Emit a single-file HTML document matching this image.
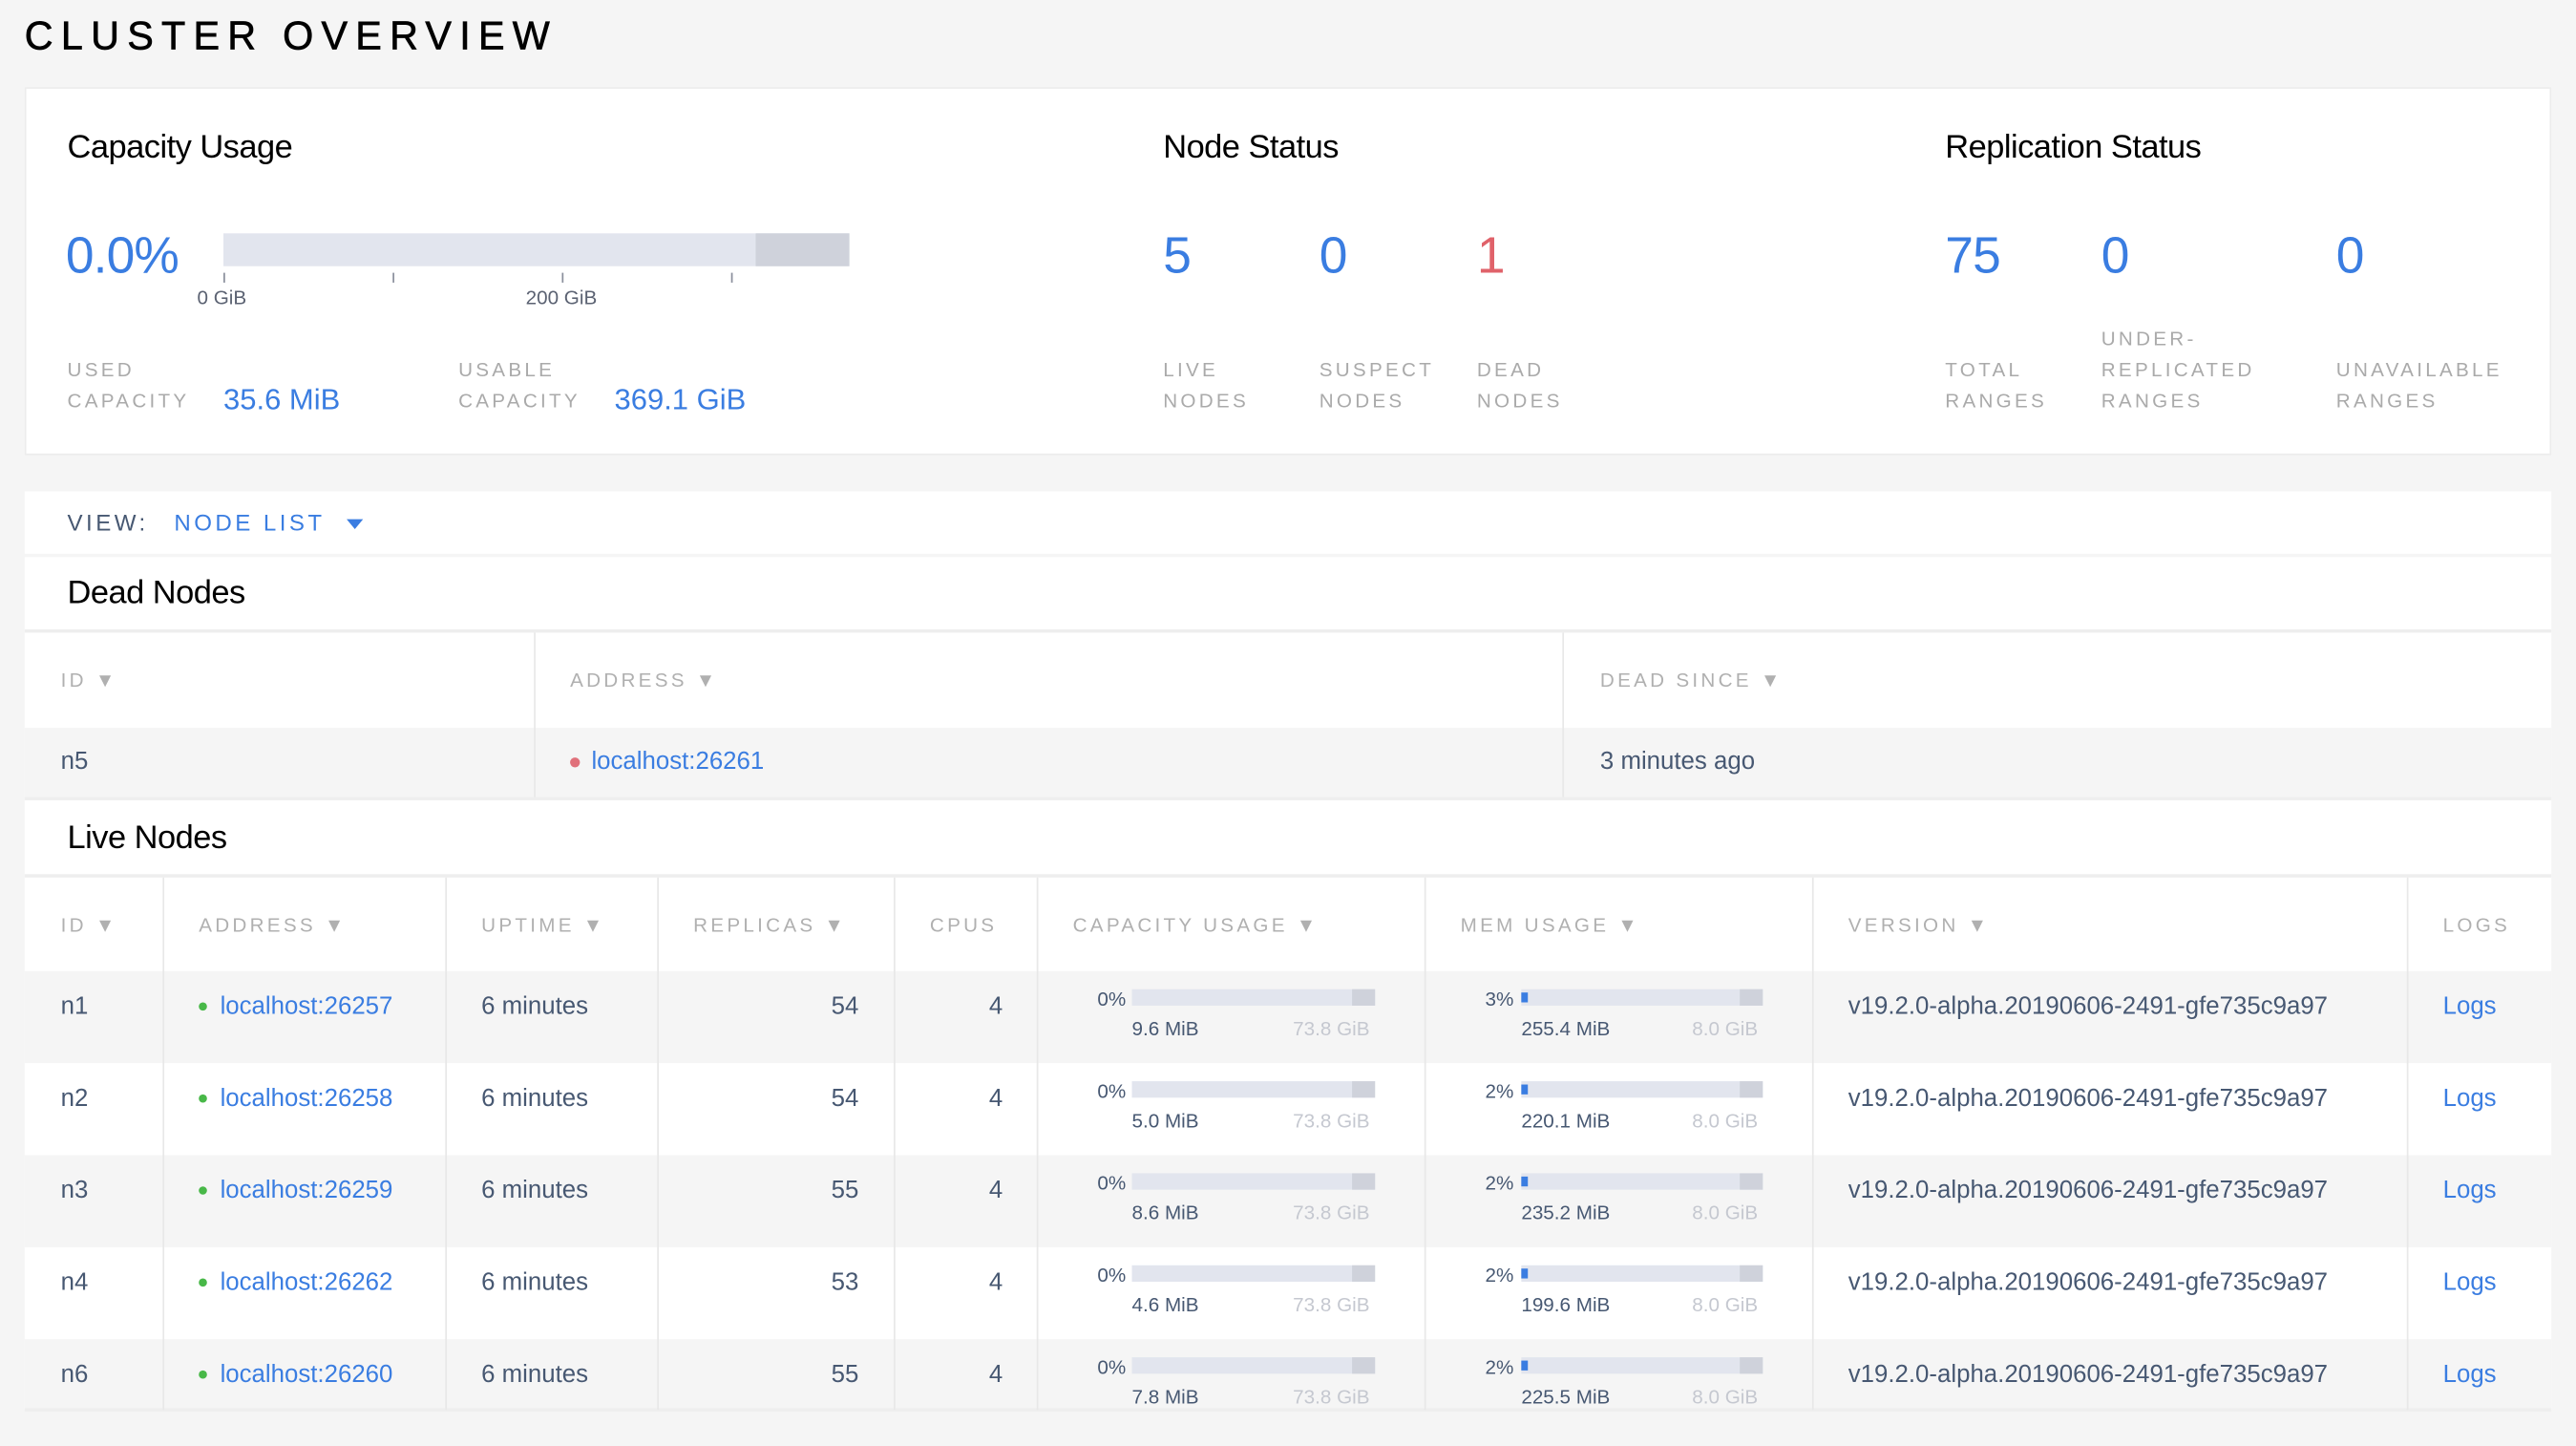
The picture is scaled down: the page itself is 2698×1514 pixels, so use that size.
<!DOCTYPE html>
<html><head><meta charset="utf-8"><style>
html,body{margin:0;padding:0;background:#f5f5f5;overflow:hidden;width:2698px;height:1514px}
#w{position:absolute;left:0;top:0;width:1568px;height:880px;transform:scale(1.72066,1.7205);transform-origin:0 0;font-family:"Liberation Sans",sans-serif;}
.a{position:absolute;white-space:nowrap;line-height:1}
.box{position:absolute;background:#fff}
.h{font-size:20px;color:#000;letter-spacing:-0.3px}
.big{font-size:31px;color:#3a7de1;letter-spacing:-0.5px}
.lbl{font-size:12px;color:#aaa;letter-spacing:1.9px}
.th{font-size:12px;color:#b0b0b0;letter-spacing:1.9px}
.td{font-size:15px;color:#475872}
.lk{color:#3a7de1}
.vl{position:absolute;width:1px;background:#e8e8e8}
.bar{position:absolute;height:10px;background:#e2e5ee}
.bar i{position:absolute;right:0;top:0;height:10px;width:14px;background:#cfd2db}
.bar b{position:absolute;left:0;top:2px;height:6px;width:4px;background:#3a7de1}
.sm{font-size:12px;color:#475872}
.gr{font-size:12px;color:#c5c8d0}
.dot{position:absolute;width:6px;height:6px;border-radius:3px}
.r{position:absolute;left:0;width:1568px;height:56px}
</style></head><body><div id="w">
<div class="a" style="left:15px;top:11px;font-size:24px;letter-spacing:4.8px;color:#000;-webkit-text-stroke:0.4px #000">CLUSTER OVERVIEW</div>

<div class="box" style="left:15px;top:53px;width:1538px;height:224px;border:1px solid #ececec;box-sizing:border-box"></div>
<div class="a h" style="left:41px;top:80px">Capacity Usage</div>
<div class="a h" style="left:708px;top:80px">Node Status</div>
<div class="a h" style="left:1184px;top:80px">Replication Status</div>

<div class="a big" style="left:40px;top:140px">0.0%</div>
<div class="bar" style="left:136px;top:142px;width:381px;height:20px"><i style="width:57px;height:20px"></i></div>
<div style="position:absolute;left:136px;top:166px;width:1px;height:6px;background:#8a8f9c"></div>
<div style="position:absolute;left:239px;top:166px;width:1px;height:6px;background:#8a8f9c"></div>
<div style="position:absolute;left:342px;top:166px;width:1px;height:6px;background:#8a8f9c"></div>
<div style="position:absolute;left:445px;top:166px;width:1px;height:6px;background:#8a8f9c"></div>
<div class="a" style="left:120px;top:175px;font-size:12px;color:#5b6272">0 GiB</div>
<div class="a" style="left:320px;top:175px;font-size:12px;color:#5b6272">200 GiB</div>

<div class="a lbl" style="left:41px;top:219px">USED</div>
<div class="a lbl" style="left:41px;top:238px">CAPACITY</div>
<div class="a" style="left:136px;top:234px;font-size:18px;color:#3a7de1">35.6 MiB</div>
<div class="a lbl" style="left:279px;top:219px">USABLE</div>
<div class="a lbl" style="left:279px;top:238px">CAPACITY</div>
<div class="a" style="left:374px;top:234px;font-size:18px;color:#3a7de1">369.1 GiB</div>

<div class="a big" style="left:708px;top:140px">5</div>
<div class="a big" style="left:803px;top:140px">0</div>
<div class="a big" style="left:899px;top:140px;color:#e0626a">1</div>
<div class="a lbl" style="left:708px;top:219px">LIVE</div><div class="a lbl" style="left:708px;top:238px">NODES</div>
<div class="a lbl" style="left:803px;top:219px">SUSPECT</div><div class="a lbl" style="left:803px;top:238px">NODES</div>
<div class="a lbl" style="left:899px;top:219px">DEAD</div><div class="a lbl" style="left:899px;top:238px">NODES</div>

<div class="a big" style="left:1184px;top:140px">75</div>
<div class="a big" style="left:1279px;top:140px">0</div>
<div class="a big" style="left:1422px;top:140px">0</div>
<div class="a lbl" style="left:1184px;top:219px">TOTAL</div><div class="a lbl" style="left:1184px;top:238px">RANGES</div>
<div class="a lbl" style="left:1279px;top:200px">UNDER-</div><div class="a lbl" style="left:1279px;top:219px">REPLICATED</div><div class="a lbl" style="left:1279px;top:238px">RANGES</div>
<div class="a lbl" style="left:1422px;top:219px">UNAVAILABLE</div><div class="a lbl" style="left:1422px;top:238px">RANGES</div>

<div class="box" style="left:15px;top:299px;width:1538px;height:38px"></div>
<div class="a" style="left:41px;top:311px;font-size:14px;letter-spacing:2px;color:#475872">VIEW:</div>
<div class="a" style="left:106px;top:311px;font-size:14px;letter-spacing:2px;color:#3a7de1">NODE LIST</div>
<div style="position:absolute;left:211px;top:316px;border-left:5px solid transparent;border-right:5px solid transparent;border-top:6px solid #3a7de1"></div>

<div class="box" style="left:15px;top:339px;width:1538px;height:519px"></div>
<div class="a h" style="left:41px;top:351px">Dead Nodes</div>
<div style="position:absolute;left:15px;top:383px;width:1538px;height:2px;background:#eee"></div>
<div style="position:absolute;left:15px;top:443px;width:1538px;height:42px;background:#f5f5f5"></div>
<div class="vl" style="left:325px;top:385px;height:100px"></div>
<div class="vl" style="left:951px;top:385px;height:100px"></div>
<div class="a th" style="left:37px;top:408px">ID ▼</div>
<div class="a th" style="left:347px;top:408px">ADDRESS ▼</div>
<div class="a th" style="left:974px;top:408px">DEAD SINCE ▼</div>
<div class="a td" style="left:37px;top:456px">n5</div>
<div class="dot" style="left:347px;top:461px;background:#e0707a"></div>
<div class="a td lk" style="left:360px;top:456px">localhost:26261</div>
<div class="a td" style="left:974px;top:456px">3 minutes ago</div>
<div style="position:absolute;left:15px;top:485px;width:1538px;height:2px;background:#eee"></div>

<div class="a h" style="left:41px;top:500px">Live Nodes</div>
<div style="position:absolute;left:15px;top:532px;width:1538px;height:2px;background:#eee"></div>
<div style="position:absolute;left:15px;top:591px;width:1538px;height:56px;background:#f5f5f5"></div>
<div style="position:absolute;left:15px;top:703px;width:1538px;height:56px;background:#f5f5f5"></div>
<div style="position:absolute;left:15px;top:815px;width:1538px;height:43px;background:#f5f5f5"></div>
<div style="position:absolute;left:15px;top:857px;width:1538px;height:2px;background:#eee"></div>
<div class="vl" style="left:99px;top:534px;height:324px"></div>
<div class="vl" style="left:271px;top:534px;height:324px"></div>
<div class="vl" style="left:400px;top:534px;height:324px"></div>
<div class="vl" style="left:544px;top:534px;height:324px"></div>
<div class="vl" style="left:631px;top:534px;height:324px"></div>
<div class="vl" style="left:867px;top:534px;height:324px"></div>
<div class="vl" style="left:1103px;top:534px;height:324px"></div>
<div class="vl" style="left:1465px;top:534px;height:324px"></div>
<div class="a th" style="left:37px;top:557px">ID ▼</div>
<div class="a th" style="left:121px;top:557px">ADDRESS ▼</div>
<div class="a th" style="left:293px;top:557px">UPTIME ▼</div>
<div class="a th" style="left:422px;top:557px">REPLICAS ▼</div>
<div class="a th" style="left:566px;top:557px">CPUS</div>
<div class="a th" style="left:653px;top:557px">CAPACITY USAGE ▼</div>
<div class="a th" style="left:889px;top:557px">MEM USAGE ▼</div>
<div class="a th" style="left:1125px;top:557px">VERSION ▼</div>
<div class="a th" style="left:1487px;top:557px">LOGS</div>

<div class="r" style="top:591px">
<div class="a td" style="left:37px;top:14px">n1</div><div class="dot" style="left:121px;top:19px;width:5px;height:5px;background:#48b848"></div><div class="a td lk" style="left:134px;top:14px">localhost:26257</div><div class="a td" style="left:293px;top:14px">6 minutes</div><div class="a td" style="left:506px;top:14px">54</div><div class="a td" style="left:602px;top:14px">4</div>
<div class="a sm" style="left:668px;top:11px">0%</div><div class="bar" style="left:689px;top:11px;width:148px"><i></i></div><div class="a sm" style="left:689px;top:29px">9.6 MiB</div><div class="a gr" style="left:787px;top:29px">73.8 GiB</div>
<div class="a sm" style="left:904px;top:11px">3%</div><div class="bar" style="left:926px;top:11px;width:147px"><i></i><b></b></div><div class="a sm" style="left:926px;top:29px">255.4 MiB</div><div class="a gr" style="left:1030px;top:29px">8.0 GiB</div>
<div class="a td" style="left:1125px;top:14px">v19.2.0-alpha.20190606-2491-gfe735c9a97</div><div class="a td lk" style="left:1487px;top:14px">Logs</div></div>
<div class="r" style="top:647px">
<div class="a td" style="left:37px;top:14px">n2</div><div class="dot" style="left:121px;top:19px;width:5px;height:5px;background:#48b848"></div><div class="a td lk" style="left:134px;top:14px">localhost:26258</div><div class="a td" style="left:293px;top:14px">6 minutes</div><div class="a td" style="left:506px;top:14px">54</div><div class="a td" style="left:602px;top:14px">4</div>
<div class="a sm" style="left:668px;top:11px">0%</div><div class="bar" style="left:689px;top:11px;width:148px"><i></i></div><div class="a sm" style="left:689px;top:29px">5.0 MiB</div><div class="a gr" style="left:787px;top:29px">73.8 GiB</div>
<div class="a sm" style="left:904px;top:11px">2%</div><div class="bar" style="left:926px;top:11px;width:147px"><i></i><b></b></div><div class="a sm" style="left:926px;top:29px">220.1 MiB</div><div class="a gr" style="left:1030px;top:29px">8.0 GiB</div>
<div class="a td" style="left:1125px;top:14px">v19.2.0-alpha.20190606-2491-gfe735c9a97</div><div class="a td lk" style="left:1487px;top:14px">Logs</div></div>
<div class="r" style="top:703px">
<div class="a td" style="left:37px;top:14px">n3</div><div class="dot" style="left:121px;top:19px;width:5px;height:5px;background:#48b848"></div><div class="a td lk" style="left:134px;top:14px">localhost:26259</div><div class="a td" style="left:293px;top:14px">6 minutes</div><div class="a td" style="left:506px;top:14px">55</div><div class="a td" style="left:602px;top:14px">4</div>
<div class="a sm" style="left:668px;top:11px">0%</div><div class="bar" style="left:689px;top:11px;width:148px"><i></i></div><div class="a sm" style="left:689px;top:29px">8.6 MiB</div><div class="a gr" style="left:787px;top:29px">73.8 GiB</div>
<div class="a sm" style="left:904px;top:11px">2%</div><div class="bar" style="left:926px;top:11px;width:147px"><i></i><b></b></div><div class="a sm" style="left:926px;top:29px">235.2 MiB</div><div class="a gr" style="left:1030px;top:29px">8.0 GiB</div>
<div class="a td" style="left:1125px;top:14px">v19.2.0-alpha.20190606-2491-gfe735c9a97</div><div class="a td lk" style="left:1487px;top:14px">Logs</div></div>
<div class="r" style="top:759px">
<div class="a td" style="left:37px;top:14px">n4</div><div class="dot" style="left:121px;top:19px;width:5px;height:5px;background:#48b848"></div><div class="a td lk" style="left:134px;top:14px">localhost:26262</div><div class="a td" style="left:293px;top:14px">6 minutes</div><div class="a td" style="left:506px;top:14px">53</div><div class="a td" style="left:602px;top:14px">4</div>
<div class="a sm" style="left:668px;top:11px">0%</div><div class="bar" style="left:689px;top:11px;width:148px"><i></i></div><div class="a sm" style="left:689px;top:29px">4.6 MiB</div><div class="a gr" style="left:787px;top:29px">73.8 GiB</div>
<div class="a sm" style="left:904px;top:11px">2%</div><div class="bar" style="left:926px;top:11px;width:147px"><i></i><b></b></div><div class="a sm" style="left:926px;top:29px">199.6 MiB</div><div class="a gr" style="left:1030px;top:29px">8.0 GiB</div>
<div class="a td" style="left:1125px;top:14px">v19.2.0-alpha.20190606-2491-gfe735c9a97</div><div class="a td lk" style="left:1487px;top:14px">Logs</div></div>
<div class="r" style="top:815px">
<div class="a td" style="left:37px;top:14px">n6</div><div class="dot" style="left:121px;top:19px;width:5px;height:5px;background:#48b848"></div><div class="a td lk" style="left:134px;top:14px">localhost:26260</div><div class="a td" style="left:293px;top:14px">6 minutes</div><div class="a td" style="left:506px;top:14px">55</div><div class="a td" style="left:602px;top:14px">4</div>
<div class="a sm" style="left:668px;top:11px">0%</div><div class="bar" style="left:689px;top:11px;width:148px"><i></i></div><div class="a sm" style="left:689px;top:29px">7.8 MiB</div><div class="a gr" style="left:787px;top:29px">73.8 GiB</div>
<div class="a sm" style="left:904px;top:11px">2%</div><div class="bar" style="left:926px;top:11px;width:147px"><i></i><b></b></div><div class="a sm" style="left:926px;top:29px">225.5 MiB</div><div class="a gr" style="left:1030px;top:29px">8.0 GiB</div>
<div class="a td" style="left:1125px;top:14px">v19.2.0-alpha.20190606-2491-gfe735c9a97</div><div class="a td lk" style="left:1487px;top:14px">Logs</div></div>
</div>
</body></html>
